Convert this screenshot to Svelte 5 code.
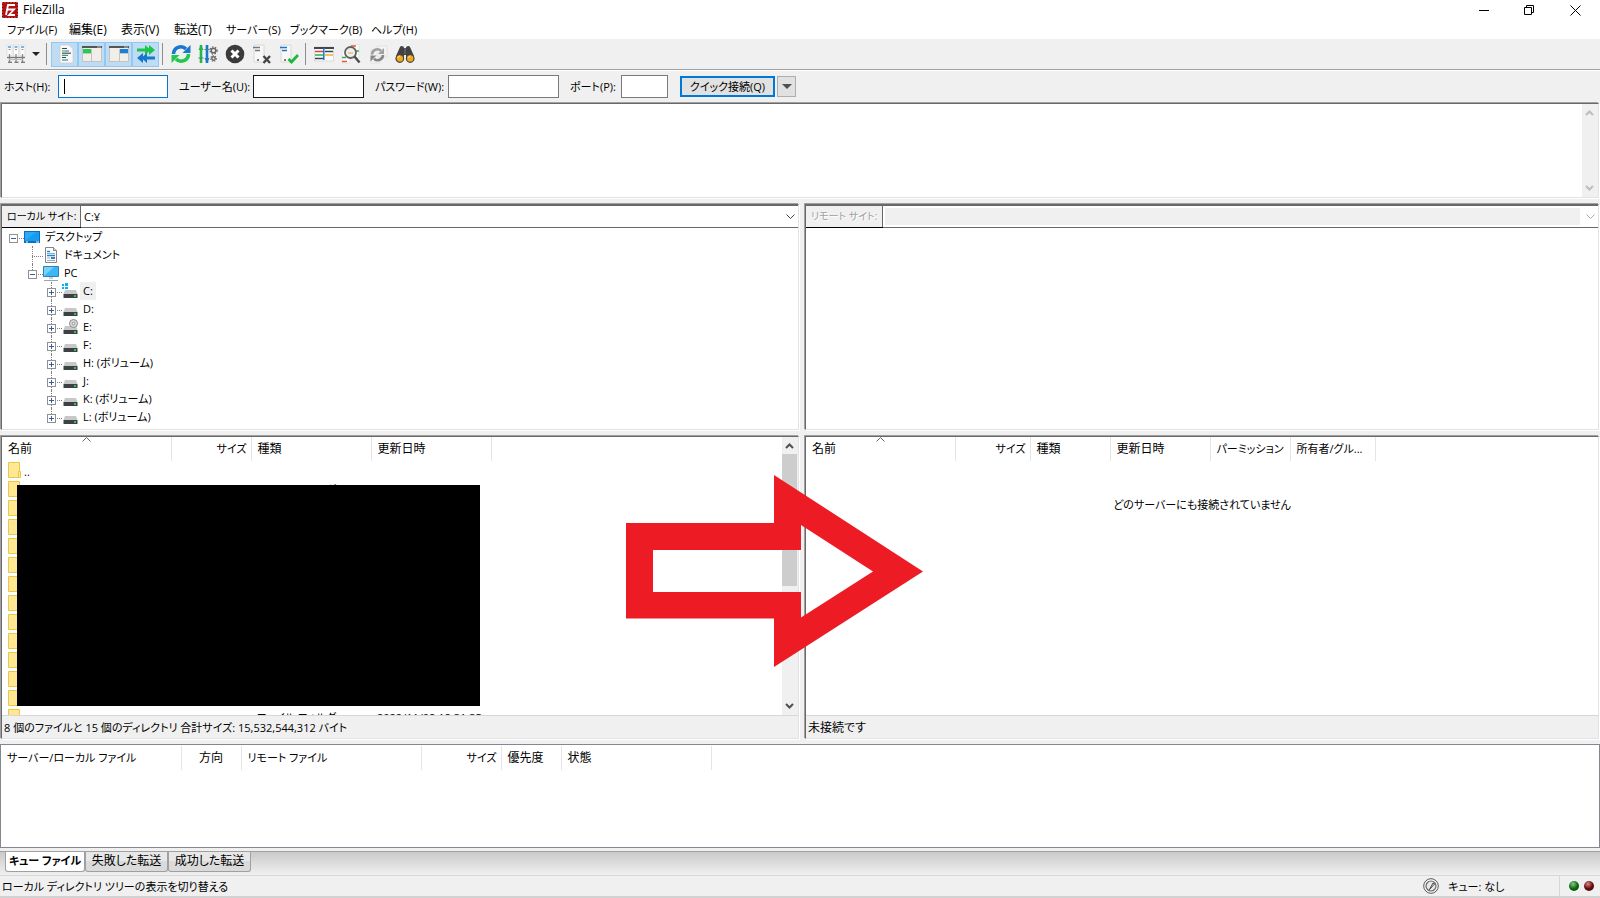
<script>
    const menus = [
        'ファイル(F)',
        '編集(E)',
        '表示(V)',
        '転送(T)',
        'サーバー(S)',
        'ブックマーク(B)',
        'ヘルプ(H)'
    ];

    // toolbar buttons, one array per separated group
    const toggles = [
        { icon: 'log', label: 'メッセージログ' },
        { icon: 'localTree', label: 'ローカルツリー' },
        { icon: 'remoteTree', label: 'リモートツリー' },
        { icon: 'queue', label: '転送キュー' }
    ];
    const actions = [
        { icon: 'refresh', label: '更新' },
        { icon: 'process', label: 'キューの処理' },
        { icon: 'cancel', label: 'キャンセル' },
        { icon: 'disconnect', label: '切断' },
        { icon: 'reconnect', label: '再接続' }
    ];
    const tools = [
        { icon: 'filter', label: 'フィルター' },
        { icon: 'compare', label: '比較' },
        { icon: 'sync', label: '同期ブラウズ' },
        { icon: 'find', label: '検索' }
    ];

    const tree = [
        { name: 'デスクトップ', level: 0, icon: 'desktop', box: '-' },
        { name: 'ドキュメント', level: 1, icon: 'doc' },
        { name: 'PC', level: 1, icon: 'pc', box: '-' },
        { name: 'C:', level: 2, icon: 'windrive', box: '+', selected: true },
        { name: 'D:', level: 2, icon: 'drive', box: '+' },
        { name: 'E:', level: 2, icon: 'cdrom', box: '+' },
        { name: 'F:', level: 2, icon: 'drive', box: '+' },
        { name: 'H: (ボリューム)', level: 2, icon: 'drive', box: '+' },
        { name: 'J:', level: 2, icon: 'drive', box: '+' },
        { name: 'K: (ボリューム)', level: 2, icon: 'drive', box: '+' },
        { name: 'L: (ボリューム)', level: 2, icon: 'drive', box: '+' }
    ];

    const localCols = [
        { name: '名前', width: 169, sorted: true },
        { name: 'サイズ', width: 80, align: 'right' },
        { name: '種類', width: 120 },
        { name: '更新日時', width: 120 }
    ];
    const remoteCols = [
        { name: '名前', width: 149, sorted: true },
        { name: 'サイズ', width: 75, align: 'right' },
        { name: '種類', width: 80 },
        { name: '更新日時', width: 100 },
        { name: 'パーミッション', width: 80 },
        { name: '所有者/グル...', width: 85 }
    ];
    const queueCols = [
        { name: 'サーバー/ローカル ファイル', width: 180 },
        { name: '方向', width: 60, align: 'center' },
        { name: 'リモート ファイル', width: 180 },
        { name: 'サイズ', width: 80, align: 'right' },
        { name: '優先度', width: 60 },
        { name: '状態', width: 150 }
    ];

    const files = [
        { name: '..' },
        { type: 'ファイル フォルダー' },
        ...Array.from({ length: 11 }, () => ({})),
        { name: 'U', type: 'ファイル フォルダー', date: '2022/11/08 18:31:35' }
    ];

    const tabs = ['キュー ファイル', '失敗した転送', '成功した転送'];
    let activeTab = $state(0);

    const hasKana = (text) => /[ァ-ヶ]/.test(text);
</script>

{#snippet toolIcon(name)}
    <svg width="20" height="20" viewBox="0 0 20 20" aria-hidden="true">
        {#if name === 'sites'}
            {#each [1, 7.5, 14] as x}
                <rect {x} y="1" width="5" height="11" fill="#fafafa" stroke="#d5d5d5" stroke-width=".6" />
                <path d="M{x + 1} 3h3" stroke="#4a97dd" stroke-width="1.400" />
                <path d="M{x + 1.5} 5.500h2" stroke="#9a9a9a" />
                <path d="M{x + 2.5} 10v8" stroke="#8a8a8a" stroke-width="1.300" />
                <path d="M{x + 1} 18.300h4" stroke="#777" stroke-width="1.300" />
            {/each}
            <path d="M1 13.500h18" stroke="#777" stroke-width="1.300" />
            <path d="M3 15.500h14" stroke="#a5c9a5" />
        {:else if name === 'log'}
            <path d="M5 1h9l4 4v14H5z" fill="#f7f7f7" stroke="#ccc" stroke-width=".7" />
            <path d="M7 4.500h5M7 13.500h4" stroke="#38464f" stroke-width="1.200" />
            <path d="M7 7h3M7 11.300h6" stroke="#3ca54b" stroke-width="1.200" />
            <path d="M10 7h4M7 16h6" stroke="#2970b8" stroke-width="1.200" />
            <path d="M7 9.200h9" stroke="#46545d" stroke-width="1.200" />
        {:else if name === 'localTree' || name === 'remoteTree'}
            <rect x=".500" y="2.500" width="19" height="15" fill="#f1eeea" stroke="#bbb" stroke-width=".8" />
            <path d="M0 3h20" stroke="#555" stroke-width="2" />
            <path d="M15 3h4" stroke="#bbb" />
            {#if name === 'localTree'}
                <path d="M1 5h8v4H1z" fill="#21cf4d" />
                <path d="M9.500 5v12M1 9.500h8" stroke="#c4c4c4" />
            {:else}
                <path d="M11 5h8v4h-8z" fill="#1580dc" />
                <path d="M10.500 5v12M11 9.500h8" stroke="#c4c4c4" />
            {/if}
        {:else if name === 'queue'}
            <path d="M1 4.500h8V1l4 3.500V1L19 6l-6 5V7.500L9 11V7.500H1z" fill="#1dc64a" />
            <path d="M19 12.500h-8V9l-4 3.500V9L1 14l6 5v-3.500L11 19v-3.500h8z" fill="#1677cd" />
        {:else if name === 'refresh'}
            <g fill="none" stroke-width="3.600">
                <path d="M2.500 10a7.300 7.300 0 0 1 12.500-5" stroke="#1678cf" />
                <path d="M19.500 1v8h-8z" fill="#1678cf" />
                <path d="M17.500 10a7.300 7.300 0 0 1-12.500 5" stroke="#1fc94b" />
                <path d="M.500 19v-8h8z" fill="#1fc94b" />
            </g>
        {:else if name === 'sync'}
            <path d="M9 2h10v11H9zM3 6h9v13H3z" fill="#f3f3f3" stroke="#ddd" stroke-width=".7" />
            <g fill="none" stroke-width="2.600">
                <path d="M4 10.500a5.300 5.300 0 0 1 9-3.700" stroke="#a0a0a0" />
                <path d="M16 4v6h-6z" fill="#a0a0a0" />
                <path d="M15 11a5.300 5.300 0 0 1-9 3.700" stroke="#878787" />
                <path d="M2.500 17.500v-6h6z" fill="#878787" />
            </g>
        {:else if name === 'process'}
            <path d="M3 19V1" stroke="#20b84b" stroke-width="2.600" />
            <path d="M.500 6L3 1l2.500 5z" fill="#20b84b" />
            <path d="M9 1v18" stroke="#1678cf" stroke-width="2.600" />
            <path d="M6.500 14L9 19l2.500-5z" fill="#1678cf" />
            <path d="M.500 14h5M6.500 5.500h5" stroke="#4a7f86" />
            <g fill="none" stroke="#666">
                <circle cx="15.500" cy="6.500" r="2.300" stroke-width="1.600" />
                <circle cx="15.500" cy="6.500" r="3.600" stroke-width="1.200" stroke-dasharray="1.500 1.500" />
                <circle cx="15.500" cy="14.500" r="1.700" stroke-width="1.400" />
                <circle cx="15.500" cy="14.500" r="2.800" stroke-width="1.100" stroke-dasharray="1.200 1.200" />
            </g>
        {:else if name === 'cancel'}
            <circle cx="10" cy="10" r="9.300" fill="#3b3b3b" />
            <path d="M6.500 6.500l7 7m0-7l-7 7" stroke="#fff" stroke-width="3" />
        {:else if name === 'disconnect' || name === 'reconnect'}
            <path d="M2 1h10v17H2z" fill="#f8f8f8" stroke="#d0d0d0" stroke-width=".8" />
            {#if name === 'disconnect'}
                <path d="M1 3.500h7M3 6.500h5" stroke="#777" stroke-width="1.300" />
                <path d="M5 16h2" stroke="#555" stroke-width="1.500" />
                <path d="M11.500 12l6.500 7m0-7l-6.500 7" stroke="#444" stroke-width="2.300" />
            {:else}
                <path d="M1 3.500h7M3 6.500h5" stroke="#1678cf" stroke-width="1.400" />
                <path d="M5 16h2" stroke="#555" stroke-width="1.500" />
                <path d="M9.500 15l3 3L19 11" fill="none" stroke="#1db83c" stroke-width="2.800" />
            {/if}
        {:else if name === 'filter'}
            <rect x=".500" y="3" width="19" height="14" fill="#fbfbfb" stroke="#ccc" stroke-width=".6" />
            <path d="M0 4h20" stroke="#3d4850" stroke-width="2" />
            <path d="M1 7.500h8" stroke="#d94242" stroke-width="1.500" />
            <path d="M11 7.500h8M1 14.500h8" stroke="#37474f" stroke-width="1.300" />
            <path d="M1 11h8" stroke="#26b34b" stroke-width="1.500" />
            <path d="M11 11h8" stroke="#e6b238" stroke-width="1.500" />
            <path d="M9.800 4v12" stroke="#1678cf" stroke-width="1.500" />
        {:else if name === 'compare'}
            <path d="M9 .500h9v13H9zM1 7h8v12H1z" fill="#fafafa" stroke="#ddd" stroke-width=".6" />
            <path d="M10 2h5M1 17.500h5" stroke="#e35c3d" stroke-width="1.300" />
            <path d="M1 13.500h4M15 7h3" stroke="#2bb04c" stroke-width="1.300" />
            <circle cx="9.500" cy="8.500" r="5.500" fill="#ececec" fill-opacity=".8" stroke="#616161" stroke-width="1.800" />
            <path d="M7 9h5" stroke="#e8b95a" stroke-width="1.300" />
            <path d="M13.500 12.500l5 6" stroke="#4b4b4b" stroke-width="2.400" />
        {:else if name === 'find'}
            <path d="M1 12L5 3c1-2 4-1 4 1h2c0-2 3-3 4-1l4 9v4h-8v-5H9v5H1z" fill="#424242" />
            <path d="M10 4v6" stroke="#757575" />
            <circle cx="4.800" cy="14.500" r="3.800" fill="#efa91b" stroke="#444" stroke-width="1.200" />
            <circle cx="15.200" cy="14.500" r="3.800" fill="#efa91b" stroke="#444" stroke-width="1.200" />
            <path d="M3 14a2 2 0 0 1 2-2M13.500 14a2 2 0 0 1 2-2" fill="none" stroke="#ffe082" />
        {/if}
    </svg>
{/snippet}

{#snippet treeIcon(name)}
    <svg width="16" height="16" viewBox="0 0 16 16" aria-hidden="true">
        {#if name === 'desktop'}
            <path d="M0 2h16v12H0z" fill="#0a6fc2" />
            <path d="M1 3h14v9H1z" fill="#189cf0" />
            <path d="M1 12L12 3H1z" fill="#2caaf8" />
            <path d="M2 13h2M12 13h3" stroke="#fff" />
        {:else if name === 'doc'}
            <path d="M2.500.500h8l3 3v12h-11z" fill="#fff" stroke="#858585" />
            <path d="M10.500.500v3h3" fill="#ddd" stroke="#858585" />
            <path d="M4 4.500h3M4 8.500h8" stroke="#1e88d6" stroke-width="1.500" />
            <path d="M4 6.500h8M4 11h3M4 13.500h8" stroke="#8cadc7" />
            <path d="M8 10h4v2H8z" fill="#377fbb" />
        {:else if name === 'pc'}
            <path d="M.500 1.500h15v10H.500z" fill="#3eb6f3" stroke="#2b83b5" />
            <path d="M1 11L11 2H1z" fill="#79d0fb" />
            <path d="M6 13h4M1 15.500h14" stroke="#91a9ba" />
        {:else}
            {#if name === 'windrive'}
                <path d="M0 1h2v2H0zM3 0h3v3H3zM0 4h2v2H0zM3 4h3v2H3z" fill="#05b4f4" />
            {/if}
            <path d="M3 7h11l1.500 4h-14z" fill="#c8c8c8" />
            <path d="M1.500 11h14v4h-14z" fill="#3e4144" />
            <path d="M12 13h2" stroke="#35ef4c" stroke-width="1.500" />
            {#if name === 'cdrom'}
                <circle cx="11.500" cy="4.500" r="4" fill="#d8d8d8" stroke="#8d8d8d" />
                <circle cx="11.500" cy="4.500" r="1.300" fill="#fff" stroke="#8d8d8d" />
            {/if}
        {/if}
    </svg>
{/snippet}

{#snippet chevron(dir, color)}
    <svg width="9" height="6" viewBox="0 0 9 6" aria-hidden="true">
        <path d={dir === 'up' ? 'M1 5l3.500-3.500L8 5' : 'M1 1l3.500 3.500L8 1'} fill="none" stroke={color} stroke-width="2" />
    </svg>
{/snippet}

{#snippet headerRow(cols)}
    <thead>
        <tr>
            {#each cols as c}
                <th class={c.align} class:kana={hasKana(c.name)} style="width:{c.width}px">
                    {#if c.sorted}
                        <svg class="sortMark" width="9" height="5" viewBox="0 0 9 5" aria-hidden="true">
                            <path d="M.500 4.500l4-4 4 4" fill="none" stroke="#666" />
                        </svg>
                    {/if}
                    {c.name}
                </th>
            {/each}
            <th class="rest"></th>
        </tr>
    </thead>
{/snippet}

<div class="window">
    <header class="titleBar">
        <svg width="16" height="16" viewBox="0 0 16 16" aria-hidden="true">
            <rect x=".500" y=".500" width="15" height="15" fill="#b30f0f" stroke="#8c0000" stroke-dasharray="2 1" />
            <path d="M4 13L6 3h7M5 7.500h7L7 13h6" fill="none" stroke="#fff" stroke-width="1.800" />
        </svg>
        <span class="caption">FileZilla</span>
        <button aria-label="最小化">
            <svg width="11" height="11" viewBox="0 0 11 11"><path d="M1 5.500h10" stroke="#000" /></svg>
        </button>
        <button aria-label="元に戻す">
            <svg width="11" height="11" viewBox="0 0 11 11">
                <path d="M.500 2.500h7v7h-7zM2.500 2.500v-2h7v7h-2" fill="none" stroke="#000" />
            </svg>
        </button>
        <button aria-label="閉じる">
            <svg width="11" height="11" viewBox="0 0 11 11"><path d="M.500.500l10 10m0-10l-10 10" stroke="#000" /></svg>
        </button>
    </header>

    <nav class="menuBar">
        {#each menus as m}
            <button class:kana={hasKana(m)}>{m}</button>
        {/each}
    </nav>

    <div class="toolbar">
        <button aria-label="サイトマネージャー">{@render toolIcon('sites')}</button>
        <button class="caretButton" aria-label="サイト一覧"><span class="caret"></span></button>
        <span class="divider"></span>
        {#each toggles as t}
            <button class="pressed" aria-label={t.label}>{@render toolIcon(t.icon)}</button>
        {/each}
        <span class="divider"></span>
        {#each actions as t}
            <button aria-label={t.label}>{@render toolIcon(t.icon)}</button>
        {/each}
        <span class="divider"></span>
        {#each tools as t}
            <button aria-label={t.label}>{@render toolIcon(t.icon)}</button>
        {/each}
    </div>

    <form class="quickConnect kana" onsubmit={(e) => e.preventDefault()}>
        <label for="host">ホスト(H):</label>
        <input id="host" class="focused" type="text" />
        <label for="user">ユーザー名(U):</label>
        <input id="user" class="hovered" type="text" />
        <label for="pass">パスワード(W):</label>
        <input id="pass" type="password" />
        <label for="port">ポート(P):</label>
        <input id="port" type="text" />
        <button class="connect" type="submit">クイック接続(Q)</button>
        <button class="history" type="button" aria-label="履歴"><span class="caret"></span></button>
    </form>

    <section class="log sunken">
        <div class="scrollbar">
            {@render chevron('up', '#bdbdbd')}
            {@render chevron('down', '#bdbdbd')}
        </div>
    </section>

    <div class="panes">
        <section class="sunken">
            <div class="site">
                <label for="localSite">ローカル サイト:</label>
                <select id="localSite"><option>C:¥</option></select>
                <svg class="open" width="9" height="6" viewBox="0 0 9 6"><path d="M.500.500l4 4 4-4" fill="none" stroke="#444" /></svg>
            </div>
            <ul class="tree">
                {#each tree as node, i}
                    <li class="level{node.level}" class:last={i === tree.length - 1}>
                        <span class="branch" class:leaf={!node.box}>
                            {#if node.box}
                                <svg width="9" height="9" viewBox="0 0 9 9" aria-hidden="true">
                                    <rect x=".500" y=".500" width="8" height="8" fill="#fff" stroke="#919191" />
                                    <path d={node.box === '+' ? 'M2 4.500h5M4.500 2v5' : 'M2 4.500h5'} stroke="#3c5aa5" />
                                </svg>
                            {/if}
                        </span>
                        {@render treeIcon(node.icon)}
                        <span class="nodeName kana" class:selected={node.selected}>{node.name}</span>
                    </li>
                {/each}
            </ul>
        </section>

        <section class="sunken">
            <div class="site disabled">
                <label for="remoteSite">リモート サイト:</label>
                <select id="remoteSite" disabled></select>
                <svg class="open" width="9" height="6" viewBox="0 0 9 6"><path d="M.500.500l4 4 4-4" fill="none" stroke="#aaa" /></svg>
            </div>
        </section>
    </div>

    <div class="panes lists">
        <section class="sunken">
            <div class="listArea">
                <div class="listBody">
                    <table>
                        {@render headerRow(localCols)}
                        <tbody>
                            {#each files as f}
                                <tr>
                                    <td>
                                        <svg width="13" height="16" viewBox="0 0 13 16" aria-hidden="true">
                                            <path d="M.500.500h11v15H.500z" fill="#ffe793" stroke="#ecc747" />
                                            <path d="M10.500 9.500h2v6h-2z" fill="#ffe793" stroke="#ecc747" />
                                        </svg>
                                        {f.name ?? ''}
                                    </td>
                                    <td></td>
                                    <td>{f.type ?? ''}</td>
                                    <td>{f.date ?? ''}</td>
                                    <td></td>
                                </tr>
                            {/each}
                        </tbody>
                    </table>
                    <div class="redaction"></div>
                </div>
                <div class="scrollbar active">
                    {@render chevron('up', '#505050')}
                    <div class="thumb"></div>
                    {@render chevron('down', '#505050')}
                </div>
            </div>
            <p class="paneStatus kana">8 個のファイルと 15 個のディレクトリ 合計サイズ: 15,532,544,312 バイト</p>
        </section>

        <section class="sunken">
            <div class="listArea">
                <div class="listBody">
                    <table>
                        {@render headerRow(remoteCols)}
                    </table>
                    <p class="empty kana">どのサーバーにも接続されていません</p>
                </div>
            </div>
            <p class="paneStatus">未接続です</p>
        </section>

        <svg class="bigArrow" width="298" height="192" viewBox="0 0 298 192" aria-hidden="true">
            <path
                fill="#ed1c24"
                fill-rule="evenodd"
                d="M0 48h148V0l149 96.500L148 192v-48.500H0zM27 75v42h148v25.500L247 96.500 175 50v25z"
            />
        </svg>
    </div>

    <section class="queue">
        <table>
            {@render headerRow(queueCols)}
        </table>
    </section>

    <div class="tabs" role="tablist">
        {#each tabs as t, i}
            <button
                role="tab"
                aria-selected={i === activeTab}
                class:current={i === activeTab}
                class:kana={hasKana(t)}
                onclick={() => (activeTab = i)}>{t}</button>
        {/each}
    </div>

    <footer class="statusBar">
        <span class="hint">ローカル ディレクトリ ツリーの表示を切り替える</span>
        <svg width="16" height="16" viewBox="0 0 16 16" aria-hidden="true">
            <circle cx="8" cy="8" r="7.300" fill="#fff" stroke="#555" />
            <circle cx="8" cy="8" r="5" fill="#e9e9e9" stroke="#666" stroke-width="1.200" />
            <path d="M6.500 11.500L10 5l1.500 1z" fill="#fff" stroke="#333" stroke-width=".9" />
        </svg>
        <span class="queueState">キュー: なし</span>
        <span class="led green"></span>
        <span class="led red"></span>
    </footer>
</div>

<style>
    :global(body) {
        margin: 0;
        background: #f0f0f0;
    }

    .window {
        display: flex;
        flex-direction: column;
        min-height: 100vh;
        background: #f0f0f0;
        color: #000;
        font-family: "Open Sans", "Noto Sans CJK JP", sans-serif;
        font-size: 12px;
        line-height: 18px;
        font-feature-settings: "palt";
        white-space: nowrap;
    }

    button,
    input,
    select {
        font: inherit;
        font-feature-settings: inherit;
        color: inherit;
        box-sizing: border-box;
        margin: 0;
        padding: 0;
        border: 0;
        border-radius: 0;
        background: none;
    }

    svg {
        display: block;
        flex: none;
    }

    p {
        margin: 0;
    }

    .kana {
        font-size: 11px;
    }

    /* title bar and menu */
    .titleBar {
        display: flex;
        align-items: center;
        height: 20px;
        padding: 0 2px;
        background: #fff;
    }
    .caption {
        flex: 1;
        padding-left: 5px;
    }
    .titleBar button {
        display: flex;
        justify-content: center;
        width: 46px;
    }

    .menuBar {
        display: grid;
        grid-template-columns: 62px 52px 53px 52px 64px 81px auto;
        justify-content: start;
        height: 19px;
        padding-left: 7px;
        background: #fff;
        line-height: 20px;
    }
    .menuBar button {
        text-align: left;
    }

    /* toolbar */
    .toolbar {
        display: flex;
        align-items: center;
        height: 30px;
        padding-left: 2px;
        border-bottom: 1px solid #a0a0a0;
        box-shadow: 0 1px 0 #fff;
    }
    .toolbar button {
        display: flex;
        align-items: center;
        justify-content: center;
        width: 27px;
        height: 25px;
    }
    .toolbar .pressed {
        background: #c0dcf3;
        border: 1px solid #90c8f6;
    }
    .toolbar .caretButton {
        width: 14px;
    }
    .caret {
        border: 4px solid transparent;
        border-top-color: #222;
        border-bottom: 0;
    }
    .divider {
        width: 1px;
        height: 22px;
        margin: 0 4px 0 3px;
        background: #8d8d8d;
    }

    /* quick connect bar */
    .quickConnect {
        display: grid;
        grid-template-columns: 58px 110px 85px 111px 84px 111px 62px 47px 107px 21px;
        align-items: center;
        height: 31px;
        padding-top: 1px;
    }
    .quickConnect label {
        padding-left: 11px;
    }
    .quickConnect label:first-child {
        padding-left: 4px;
    }
    .quickConnect input {
        height: 23px;
        padding: 0 4px;
        background: #fff;
        border: 1px solid #7a7a7a;
    }
    .quickConnect .focused {
        border-color: #0078d7;
        /* text cursor */
        background: linear-gradient(#000, #000) 5px 3px / 1px 15px no-repeat #fff;
    }
    .quickConnect .hovered {
        border-color: #171717;
    }
    .connect {
        height: 21px;
        margin-left: 12px;
        background: #e1e1e1;
        border: 2px solid #0078d7;
        line-height: 16px;
    }
    .history {
        display: flex;
        align-items: center;
        justify-content: center;
        height: 21px;
        margin-left: 2px;
        background: #e1e1e1;
        border: 1px solid #adadad;
    }
    .history .caret {
        border-width: 5px 5px 0;
        border-top-color: #505050;
    }

    /* two-tone bevel used by every pane */
    .sunken {
        display: flex;
        flex-direction: column;
        min-width: 0;
        margin: 1px;
        background: #fff;
        border: 1px solid;
        border-color: #696969 #e3e3e3 #e3e3e3 #696969;
        box-shadow:
            -1px -1px 0 #a0a0a0,
            1px 1px 0 #fff;
    }

    .log {
        align-items: flex-end;
        height: 93px;
        margin-bottom: 5px;
    }

    .scrollbar {
        display: flex;
        flex-direction: column;
        align-items: center;
        justify-content: space-between;
        box-sizing: border-box;
        width: 16px;
        flex: 1;
        padding: 6px 1px 6px 0;
        background: #f0f0f0;
    }
    .scrollbar.active {
        flex: none;
        justify-content: flex-start;
    }
    .scrollbar.active svg:last-child {
        margin-top: auto;
    }
    .thumb {
        width: 15px;
        height: 132px;
        margin-top: 5px;
        background: #cdcdcd;
    }

    .panes {
        position: relative;
        display: grid;
        grid-template-columns: minmax(0, 200fr) minmax(0, 199fr);
        column-gap: 4px;
        margin-bottom: 4px;
    }
    .lists {
        flex: 1;
    }

    /* site path row */
    .site {
        position: relative;
        display: flex;
        height: 21px;
        border-top: 1px solid #696969;
        border-bottom: 1px solid #696969;
    }
    .site label {
        width: 73px;
        padding-left: 5px;
        font-size: 10px;
        line-height: 20px;
        background: #f0f0f0;
        border-right: 1px solid #696969;
        box-shadow: 0 1px 0 #000;
    }
    .site select {
        flex: 1;
        appearance: none;
        padding-left: 3px;
        font-size: 11px;
        opacity: 1;
    }
    .site .open {
        position: absolute;
        right: 3px;
        top: 8px;
    }
    .disabled label {
        width: 71px;
        color: #a0a0a0;
        text-shadow: 1px 1px 0 #fff;
    }
    .disabled select {
        margin: 2px 18px 2px 2px;
        background: #f0f0f0;
    }

    /* directory tree */
    .tree {
        margin: 0;
        padding: 0 0 3px 3px;
        list-style: none;
    }
    .tree li {
        display: flex;
        align-items: center;
        height: 18px;
    }
    .level1 {
        padding-left: 19px;
    }
    .level2 {
        padding-left: 38px;
    }
    .branch {
        position: relative;
        display: flex;
        align-items: center;
        width: 19px;
        height: 18px;
        padding: 2px 0 0 4px;
        box-sizing: border-box;
    }
    .branch svg {
        position: relative;
        z-index: 1;
    }
    .branch::before {
        content: "";
        position: absolute;
        left: 8px;
        right: 0;
        top: 10px;
        border-top: 1px dotted #808080;
    }
    .level1 .branch::after,
    .level2 .branch::after {
        content: "";
        position: absolute;
        left: 8px;
        top: 0;
        height: 18px;
        border-left: 1px dotted #808080;
    }
    .level1 .branch:not(.leaf)::after,
    .last .branch::after {
        height: 10px;
    }
    .nodeName {
        margin-left: 2px;
        padding: 0 3px;
    }
    .nodeName.selected {
        background: #f0f0f0;
    }

    /* file lists */
    .listArea {
        display: flex;
        flex: 1 1 0;
        min-height: 0;
        overflow: hidden;
    }
    .listBody {
        position: relative;
        flex: 1;
        min-width: 0;
    }
    table {
        width: 100%;
        table-layout: fixed;
        border-collapse: collapse;
    }
    th {
        position: relative;
        box-sizing: border-box;
        height: 24px;
        padding: 0 6px;
        font-weight: normal;
        text-align: left;
        border-right: 1px solid #e5e5e5;
    }
    th.right {
        padding-right: 4px;
        text-align: right;
    }
    th.center {
        text-align: center;
    }
    th.rest {
        border: 0;
    }
    .sortMark {
        position: absolute;
        left: calc(50% - 4px);
        top: 0;
    }
    td {
        height: 19px;
        padding: 0 6px;
        font-size: 11px;
        line-height: 19px;
    }
    td:first-child {
        display: flex;
        align-items: flex-start;
        gap: 3px;
        padding-top: 1px;
        height: 18px;
    }
    /* covers the private file names */
    .redaction {
        position: absolute;
        left: 15px;
        top: 48px;
        width: 463px;
        height: 221px;
        background: #000;
    }
    .empty {
        padding-top: 35px;
        text-align: center;
    }
    .paneStatus {
        height: 22px;
        padding-left: 2px;
        line-height: 24px;
        background: #f0f0f0;
        border-top: 1px solid #d7d7d7;
    }

    .bigArrow {
        position: absolute;
        left: 626px;
        top: 40px;
        z-index: 2;
    }

    /* transfer queue */
    .queue {
        box-sizing: border-box;
        height: 104px;
        padding-top: 1px;
        background: #fff;
        border: 1px solid #828790;
    }

    .tabs {
        display: flex;
        align-items: flex-start;
        height: 23px;
        margin-top: 3px;
        padding-left: 5px;
        border-top: 1px solid #a0a0a0;
        background: linear-gradient(#cacaca, #f0f0f0);
    }
    .tabs button {
        width: 83px;
        height: 20px;
        background: linear-gradient(#e8e8e8 50%, #dadada 50%);
        border: 1px solid #a0a0a0;
        border-top: 0;
        border-radius: 0 0 3px 3px;
        line-height: 16px;
        padding-bottom: 2px;
    }
    .tabs .current {
        width: 80px;
        background: #fff;
        font-weight: bold;
    }

    .statusBar {
        display: flex;
        align-items: center;
        height: 20px;
        padding-right: 6px;
        border-top: 1px solid #d7d7d7;
        border-bottom: 2px solid #d2d2d2;
        font-size: 11px;
        line-height: 20px;
    }
    .hint {
        flex: 1;
        padding: 2px 0 0 2px;
    }
    .queueState {
        width: 121px;
        box-sizing: border-box;
        padding: 2px 0 0 9px;
        margin: 0 9px 0 0;
        border-right: 1px solid #d7d7d7;
    }
    .led {
        width: 10px;
        height: 10px;
        margin-left: 5px;
        border-radius: 50%;
    }
    .green {
        margin-left: 0;
        background: radial-gradient(circle at 40% 30%, #8fc78f, #0b6b0b 50%, #044004);
    }
    .red {
        background: radial-gradient(circle at 40% 30%, #c78f8f, #6b0b0b 50%, #400404);
    }
</style>
